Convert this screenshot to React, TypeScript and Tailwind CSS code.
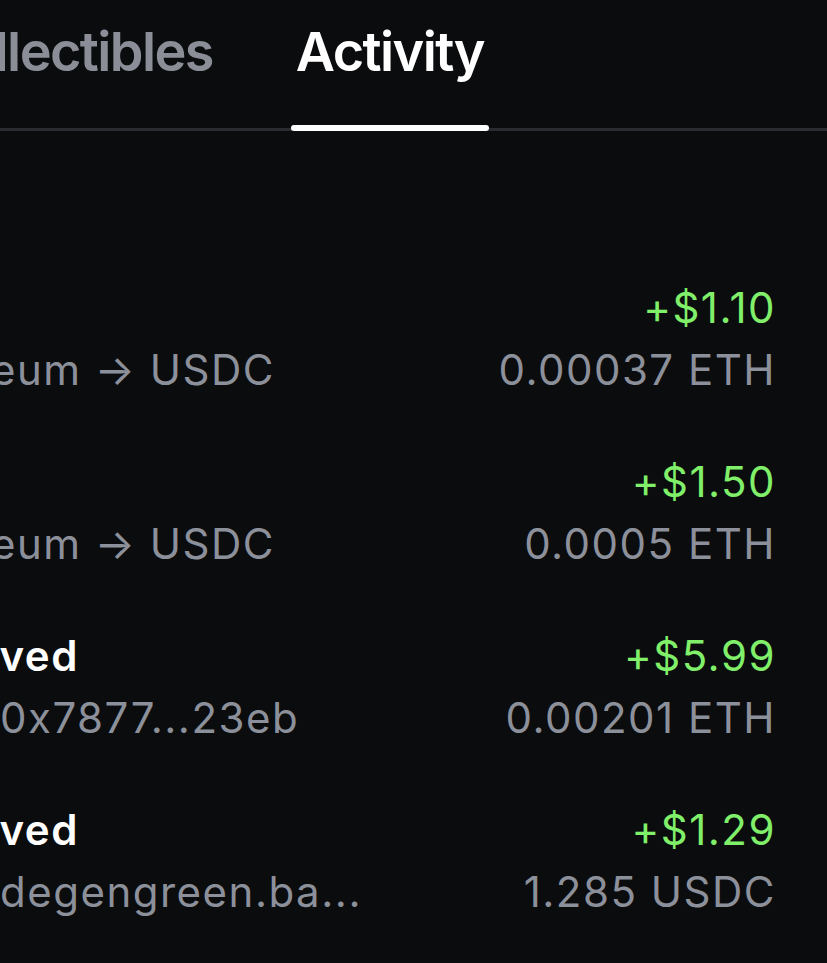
import React from "react";

type Row = {
  title: string;
  subtitle: string;
  amount: string;
  detail: string;
};

const rows: Row[] = [
  { title: "Sold", subtitle: "Ethereum → USDC", amount: "+$1.10", detail: "0.00037 ETH" },
  { title: "Sold", subtitle: "Ethereum → USDC", amount: "+$1.50", detail: "0.0005 ETH" },
  { title: "Received", subtitle: "From 0x7877...23eb", amount: "+$5.99", detail: "0.00201 ETH" },
  { title: "Received", subtitle: "From degengreen.ba...", amount: "+$1.29", detail: "1.285 USDC" },
];

const tabs = [
  { label: "Tokens", active: false },
  { label: "Collectibles", active: false },
  { label: "Activity", active: true },
];

export default function App() {
  return (
    <div
      className="w-[827px] h-[963px] overflow-hidden bg-[#0b0c0e] text-white"
      style={{ fontFamily: "Inter, 'Noto Sans', sans-serif" }}
    >
      {/* Tabs */}
      <div className="flex justify-end pr-[338px] pt-[25px] border-b-[3px] border-[#2a2b30]">
        <div className="flex gap-[73px] shrink-0">
          {tabs.map((t) => (
            <div key={t.label} className="flex flex-col items-stretch shrink-0 mb-[-3px]">
              <span
                className={`px-[5px] text-[54px] leading-[54px] font-semibold whitespace-nowrap tracking-[-1.6px] ${
                  t.active ? "text-white" : "text-[#8b8e97]"
                }`}
              >
                {t.label}
              </span>
              <div
                className={`mt-[46px] h-[6px] rounded-full ${t.active ? "bg-white" : "bg-transparent"}`}
              />
            </div>
          ))}
        </div>
      </div>

      {/* Activity list */}
      <div className="ml-[-120px] pr-[51px] pt-[146px] flex flex-col gap-[50px]">
        {rows.map((r, i) => (
          <div
            key={i}
            className="flex justify-between items-start text-[42px] leading-[62px] tracking-[1.5px]"
          >
            <div className="flex flex-col whitespace-nowrap">
              <span className="font-semibold text-white">{r.title}</span>
              <span className="text-[#8c909a]">{r.subtitle}</span>
            </div>
            <div className="flex flex-col items-end whitespace-nowrap">
              <span className="text-[#80ef6a]">{r.amount}</span>
              <span className="text-[#8c909a]">{r.detail}</span>
            </div>
          </div>
        ))}
      </div>
    </div>
  );
}
